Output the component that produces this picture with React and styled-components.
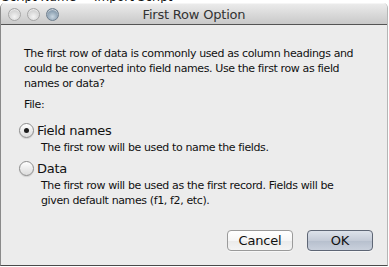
import React, { useState } from 'react';
import styled, { createGlobalStyle } from 'styled-components';

const GlobalStyle = createGlobalStyle`
  html, body {
    margin: 0;
    padding: 0;
    background: #ffffff;
  }
  body {
    font-family: "DejaVu Sans", "Liberation Sans", sans-serif;
    width: 389px;
    height: 267px;
    overflow: hidden;
  }
`;

const Backdrop = styled.div`
  width: 389px;
  height: 267px;
  display: flex;
  flex-direction: column;
`;

// sliver of the window behind, only the bottom of its text shows
const BehindStrip = styled.div`
  height: 3px;
  overflow: hidden;
  font-family: "DejaVu Sans", sans-serif;
  font-size: 12px;
  color: #111;
  white-space: nowrap;
  padding-left: 2px;
  display: flex;
  gap: 18px;
`;

const BehindText = styled.span`
  display: block;
  margin-top: -9px;
  line-height: 12px;
`;

const Window = styled.div`
  width: 386px;
  height: 262px;
  display: flex;
  flex-direction: column;
  background: #ececec;
  border-left: 1px solid #8a8a8a;
  border-bottom: 1px solid #4a4a4a;
  border-right: 1px solid #b5b5b5;
  border-radius: 5px 5px 0 0;
  overflow: hidden;
`;

const TitleBar = styled.div`
  height: 20px;
  flex: none;
  display: flex;
  align-items: center;
  position: relative;
  background: linear-gradient(#ebebeb, #d6d6d6 60%, #c9c9c9);
  border-bottom: 1px solid #545454;
  border-top: 1px solid #f5f5f5;
`;

const Lights = styled.div`
  display: flex;
  gap: 6px;
  padding-left: 7px;
`;

const Light = styled.span`
  width: 13px;
  height: 13px;
  border-radius: 50%;
  box-sizing: border-box;
  border: 1px solid ${p => (p.$active ? '#6f7f8e' : '#a6a6a6')};
  background: ${p =>
    p.$active
      ? 'radial-gradient(circle at 50% 70%, #c9d6e0 0%, #8fa3b4 55%, #5f7285 100%)'
      : 'radial-gradient(circle at 50% 70%, #f4f4f4 0%, #d8d8d8 55%, #b9b9b9 100%)'};
  box-shadow: inset 0 1px 1px rgba(255, 255, 255, 0.7);
`;

const Title = styled.div`
  position: absolute;
  left: 0;
  right: 0;
  text-align: center;
  font-size: 13px;
  letter-spacing: -0.2px;
  color: #333;
  pointer-events: none;
`;

const Body = styled.div`
  flex: 1;
  padding: 21px 14px 0 23px;
  display: flex;
  flex-direction: column;
  font-size: 11px;
  letter-spacing: -0.38px;
  color: #111;
`;

const Message = styled.p`
  margin: 0;
  line-height: 15px;
  width: 348px;
`;

const Label = styled.div`
  margin-top: 6px;
  line-height: 15px;
`;

const Options = styled.div`
  margin-top: 9px;
  display: flex;
  flex-direction: column;
  gap: 4px;
`;

const Option = styled.label`
  display: flex;
  flex-direction: column;
  cursor: default;
`;

const OptionHead = styled.div`
  display: flex;
  align-items: center;
  gap: 3px;
  margin-left: -5px;
  font-size: 13px;
  letter-spacing: -0.3px;
  line-height: 19px;
`;

const Radio = styled.span`
  width: 15px;
  height: 15px;
  box-sizing: border-box;
  border-radius: 50%;
  border: 1px solid #8c8c8c;
  background: linear-gradient(#ffffff, #ececec 50%, #dcdcdc);
  box-shadow: 0 1px 1px rgba(0, 0, 0, 0.12);
  display: flex;
  align-items: center;
  justify-content: center;

  &::after {
    content: '';
    width: 5px;
    height: 5px;
    border-radius: 50%;
    background: #1c1c1c;
    display: ${p => (p.$checked ? 'block' : 'none')};
  }
`;

const OptionText = styled.div`
  padding-left: 17px;
  line-height: 15px;
  width: 314px;
`;

const Footer = styled.div`
  margin-top: auto;
  display: flex;
  justify-content: flex-end;
  gap: 14px;
  padding-bottom: 14px;
`;

const Button = styled.button`
  width: 66px;
  height: 21px;
  border-radius: 4px;
  font-family: "DejaVu Sans", sans-serif;
  font-size: 13px;
  letter-spacing: -0.2px;
  color: #111;
  padding: 0;
  border: 1px solid ${p => (p.$primary ? '#5e6675' : '#9a9a9a')};
  background: ${p =>
    p.$primary
      ? 'linear-gradient(#dde2ea, #c4cbd7 50%, #b6bfcd 51%, #c9d0dc)'
      : 'linear-gradient(#ffffff, #f6f6f6 50%, #eaeaea 51%, #f4f4f4)'};
  box-shadow: 0 1px 0 rgba(255, 255, 255, 0.6);
`;

const options = [
  { id: 'names', label: 'Field names', text: 'The first row will be used to name the fields.' },
  {
    id: 'data',
    label: 'Data',
    text: 'The first row will be used as the first record. Fields will be given default names (f1, f2, etc).',
  },
];

const App = () => {
  const [choice, setChoice] = useState('names');

  return (
    <Backdrop>
      <GlobalStyle />
      <BehindStrip>
        <BehindText>Script Name</BehindText>
        <BehindText>Import Script</BehindText>
      </BehindStrip>
      <Window>
        <TitleBar>
          <Lights>
            <Light />
            <Light />
            <Light $active />
          </Lights>
          <Title>First Row Option</Title>
        </TitleBar>
        <Body>
          <Message>
            The first row of data is commonly used as column headings and could be converted into field names. Use the first row as field names or data?
          </Message>
          <Label>File:</Label>
          <Options>
            {options.map(o => (
              <Option key={o.id} onClick={() => setChoice(o.id)}>
                <OptionHead>
                  <Radio $checked={choice === o.id} />
                  {o.label}
                </OptionHead>
                <OptionText>{o.text}</OptionText>
              </Option>
            ))}
          </Options>
          <Footer>
            <Button>Cancel</Button>
            <Button $primary>OK</Button>
          </Footer>
        </Body>
      </Window>
    </Backdrop>
  );
};

export default App;
